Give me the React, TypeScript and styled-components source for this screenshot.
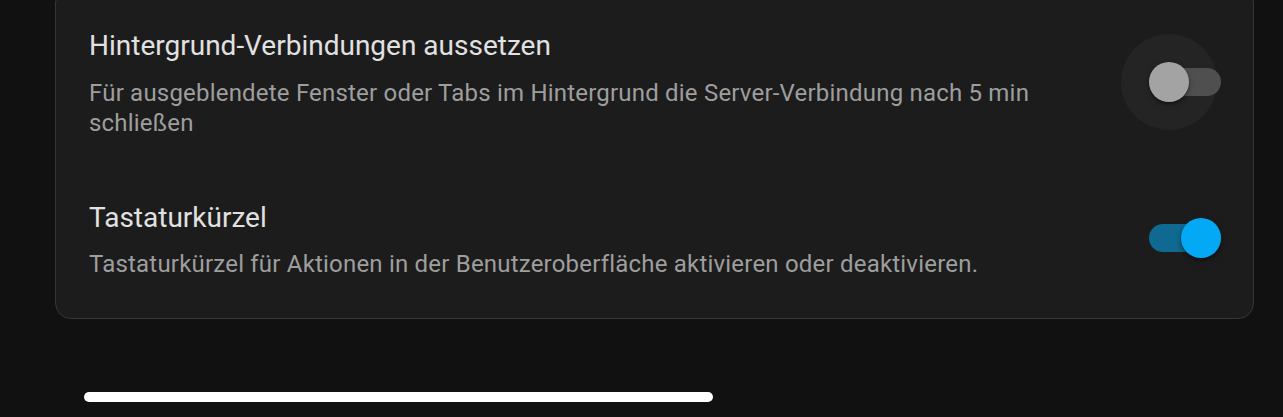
import React from "react";
import styled, { createGlobalStyle } from "styled-components";

const Global = createGlobalStyle`
  html, body { margin: 0; padding: 0; background: #111111; overflow: hidden; }
  body { font-family: Roboto, "Noto Sans", sans-serif; -webkit-font-smoothing: antialiased; }
`;

const Page = styled.div`
  width: 1283px;
  height: 417px;
  box-sizing: border-box;
  padding: 0 29px 0 55px;
  overflow: hidden;
`;

const Card = styled.section`
  margin-top: -13px;
  background: #1c1c1c;
  border: 1px solid #363636;
  border-radius: 16px;
  padding: 8px 8px 9px 0;
`;

const Row = styled.div`
  display: flex;
  align-items: center;
  padding: 30px 0 30px 33px;
`;

const Texts = styled.div`
  flex: 1;
  min-width: 0;
  display: flex;
  flex-direction: column;
  gap: 11.5px;
`;

const Title = styled.div`
  font-size: 28px;
  line-height: 40px;
  color: #e1e1e1;
`;

const Description = styled.div`
  font-size: 24px;
  line-height: 30px;
  letter-spacing: 0.2px;
  color: #9e9e9e;
`;

const SwitchRoot = styled.div`
  flex: none;
  width: 116px;
  height: 76px;
  margin: 0 2px 0 16px;
  display: flex;
  align-items: center;
  justify-content: center;
  position: relative;
`;

const Halo = styled.div<{ $on: boolean }>`
  position: absolute;
  width: 96px;
  height: 96px;
  border-radius: 50%;
  background: #242424;
  top: 50%;
  left: ${(p) => (p.$on ? 74 : 42)}px;
  transform: translate(-50%, -50%);
`;

const Track = styled.div<{ $on: boolean }>`
  position: relative;
  width: 72px;
  height: 28px;
  border-radius: 14px;
  background: ${(p) => (p.$on ? "#0f6990" : "#4f4f4f")};
`;

const Thumb = styled.div<{ $on: boolean }>`
  position: absolute;
  width: 40px;
  height: 40px;
  border-radius: 50%;
  top: -6px;
  left: ${(p) => (p.$on ? 32 : 0)}px;
  background: ${(p) => (p.$on ? "#03a9f4" : "#a3a3a3")};
  box-shadow: 0 2px 3px rgba(0, 0, 0, 0.35), 0 2px 6px rgba(0, 0, 0, 0.2);
`;

const Indicator = styled.div`
  margin: 73px 0 0 29px;
  width: 629px;
  height: 10px;
  border-radius: 5px;
  background: #ffffff;
`;

function Toggle({ on, focused }: { on: boolean; focused?: boolean }) {
  return (
    <SwitchRoot>
      {focused && <Halo $on={on} />}
      <Track $on={on}>
        <Thumb $on={on} />
      </Track>
    </SwitchRoot>
  );
}

const settings = [
  {
    title: "Hintergrund-Verbindungen aussetzen",
    description:
      "Für ausgeblendete Fenster oder Tabs im Hintergrund die Server-Verbindung nach 5 min schließen",
    on: false,
    focused: true,
  },
  {
    title: "Tastaturkürzel",
    description:
      "Tastaturkürzel für Aktionen in der Benutzeroberfläche aktivieren oder deaktivieren.",
    on: true,
    focused: false,
  },
];

export default function App() {
  return (
    <>
      <Global />
      <Page>
        <Card>
          {settings.map((s) => (
            <Row key={s.title}>
              <Texts>
                <Title>{s.title}</Title>
                <Description>{s.description}</Description>
              </Texts>
              <Toggle on={s.on} focused={s.focused} />
            </Row>
          ))}
        </Card>
        <Indicator />
      </Page>
    </>
  );
}
